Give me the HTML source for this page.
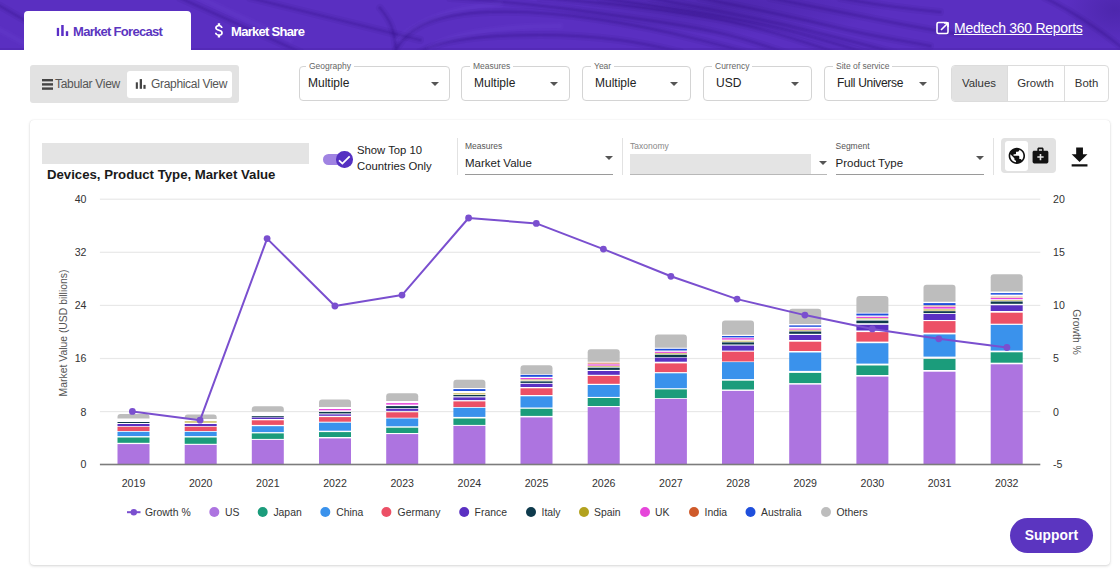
<!DOCTYPE html>
<html><head><meta charset="utf-8">
<style>
*{box-sizing:border-box;margin:0;padding:0}
html,body{width:1120px;height:569px;overflow:hidden;background:#fff;font-family:"Liberation Sans",sans-serif;color:#222}
.abs{position:absolute}
#hdr{position:absolute;left:0;top:0;width:1120px;height:50px;background:linear-gradient(90deg,#5c30c4 0%,#5a2fc0 40%,#5529b8 70%,#5a2fc0 100%);overflow:hidden}
.tab{position:absolute;top:12px;height:39px;font-weight:700;font-size:13px;letter-spacing:-0.7px;line-height:39px}
.box{position:absolute;top:66px;height:35px;border:1px solid #d4d4d4;border-radius:4px;background:#fff}
.box .lbl{position:absolute;top:-6px;left:8px;padding:0 3px;background:#fff;font-size:8.5px;color:#666;line-height:10px}
.box .val{position:absolute;left:12px;top:9px;font-size:12px;color:#222;line-height:14px}
.arr{position:absolute;width:0;height:0;border-left:4px solid transparent;border-right:4px solid transparent;border-top:4px solid #555}
.seg{position:absolute;top:65px;height:37px;font-size:11.4px;color:#333;line-height:37px;text-align:center}
</style></head><body>

<div id="hdr">
<svg width="1120" height="50" style="position:absolute;left:0;top:0">
 <defs>
  <radialGradient id="rg1" cx="0.5" cy="0.5" r="0.5"><stop offset="0" stop-color="#3a1a90" stop-opacity="0.4"/><stop offset="1" stop-color="#3a1a90" stop-opacity="0"/></radialGradient>
 </defs>
 <rect width="1120" height="50" fill="#5a2fc1"/>
 <ellipse cx="720" cy="6" rx="170" ry="30" fill="url(#rg1)"/>
 <ellipse cx="1115" cy="10" rx="50" ry="35" fill="url(#rg1)"/>
 <g fill="none" stroke="#2a0c78" stroke-opacity="0.07" stroke-width="8" stroke-linecap="round"><path d="M0 6 L80 52"/><path d="M180 -2 L300 52"/><path d="M250 -2 L420 40"/><path d="M395 52 C405 30 430 14 490 12 S620 20 700 40 S740 52 760 56"/><path d="M420 52 C440 40 480 35 540 35 S640 42 680 52"/><path d="M450 -2 C520 2 580 10 660 22 S760 45 790 54"/><path d="M540 -2 C600 2 650 8 700 16 S800 40 840 54"/><path d="M600 -2 C650 5 700 12 750 22 S840 45 870 54"/><path d="M650 -2 C690 6 740 14 790 26 S870 46 900 54"/><path d="M700 -2 C740 6 780 14 830 26 S900 40 930 46"/><path d="M770 -2 C800 4 840 12 880 20 S930 30 960 34"/><path d="M840 -2 C870 4 900 8 940 12"/><path d="M1045 -2 C1070 10 1100 30 1120 46"/><path d="M380 8 C390 20 395 30 396 52"/></g>
 <g fill="none" stroke="#2a0c78" stroke-opacity="0.09" stroke-width="4" stroke-linecap="round"><path d="M0 6 L80 52"/><path d="M180 -2 L300 52"/><path d="M250 -2 L420 40"/><path d="M395 52 C405 30 430 14 490 12 S620 20 700 40 S740 52 760 56"/><path d="M420 52 C440 40 480 35 540 35 S640 42 680 52"/><path d="M450 -2 C520 2 580 10 660 22 S760 45 790 54"/><path d="M540 -2 C600 2 650 8 700 16 S800 40 840 54"/><path d="M600 -2 C650 5 700 12 750 22 S840 45 870 54"/><path d="M650 -2 C690 6 740 14 790 26 S870 46 900 54"/><path d="M700 -2 C740 6 780 14 830 26 S900 40 930 46"/><path d="M770 -2 C800 4 840 12 880 20 S930 30 960 34"/><path d="M840 -2 C870 4 900 8 940 12"/><path d="M1045 -2 C1070 10 1100 30 1120 46"/><path d="M380 8 C390 20 395 30 396 52"/></g>
 <g fill="none" stroke="#2a0c78" stroke-opacity="0.12" stroke-width="1.8" stroke-linecap="round"><path d="M0 6 L80 52"/><path d="M180 -2 L300 52"/><path d="M250 -2 L420 40"/><path d="M395 52 C405 30 430 14 490 12 S620 20 700 40 S740 52 760 56"/><path d="M420 52 C440 40 480 35 540 35 S640 42 680 52"/><path d="M450 -2 C520 2 580 10 660 22 S760 45 790 54"/><path d="M540 -2 C600 2 650 8 700 16 S800 40 840 54"/><path d="M600 -2 C650 5 700 12 750 22 S840 45 870 54"/><path d="M650 -2 C690 6 740 14 790 26 S870 46 900 54"/><path d="M700 -2 C740 6 780 14 830 26 S900 40 930 46"/><path d="M770 -2 C800 4 840 12 880 20 S930 30 960 34"/><path d="M840 -2 C870 4 900 8 940 12"/><path d="M1045 -2 C1070 10 1100 30 1120 46"/><path d="M380 8 C390 20 395 30 396 52"/></g>
 <g fill="none" stroke="#8a62f0" stroke-opacity="0.05" stroke-width="8" stroke-linecap="round"><path d="M0 30 L40 52"/><path d="M200 -2 L290 40"/><path d="M398 40 C420 20 450 8 500 4"/><path d="M430 48 C450 34 500 26 560 26"/></g>
 <g fill="none" stroke="#8a62f0" stroke-opacity="0.06" stroke-width="4" stroke-linecap="round"><path d="M0 30 L40 52"/><path d="M200 -2 L290 40"/><path d="M398 40 C420 20 450 8 500 4"/><path d="M430 48 C450 34 500 26 560 26"/></g>
 <rect y="48" width="1120" height="2" fill="#4a24a8" opacity="0.4"/>
</svg>
</div>

<!-- Tabs -->
<div class="abs" style="left:24px;top:11px;width:167px;height:40px;background:#fff;border-radius:4px 4px 0 0"></div>
<svg class="abs" style="left:50px;top:20px" width="30" height="20"><rect x="6.8" y="7.9" width="2.3" height="8.1" fill="#5a2ec6"/><rect x="11.2" y="5" width="2.5" height="11" fill="#5a2ec6"/><rect x="15.8" y="11.2" width="2.4" height="4.8" fill="#5a2ec6"/></svg>
<div class="tab" style="left:73px;color:#5b35c0">Market Forecast</div>
<svg class="abs" style="left:210px;top:21px" width="20" height="20"><path transform="scale(0.78)" d="M11.8 10.9c-2.27-.59-3-1.2-3-2.15 0-1.09 1.01-1.85 2.7-1.85 1.78 0 2.44.85 2.5 2.1h2.21c-.07-1.72-1.12-3.3-3.21-3.81V3h-3v2.16c-1.94.42-3.5 1.68-3.5 3.61 0 2.31 1.91 3.46 4.7 4.13 2.5.6 3 1.48 3 2.41 0 .69-.49 1.79-2.7 1.79-2.06 0-2.87-.92-2.98-2.1h-2.2c.12 2.19 1.76 3.42 3.68 3.83V21h3v-2.15c1.95-.37 3.5-1.5 3.5-3.55 0-2.84-2.43-3.81-4.7-4.4z" fill="#fff"/></svg>
<div class="tab" style="left:231px;color:#fff">Market Share</div>

<!-- Medtech link -->
<svg class="abs" style="left:936px;top:21px" width="14" height="14"><rect x="1" y="1.5" width="11" height="11" rx="1.5" fill="none" stroke="#fff" stroke-width="1.6"/><path d="M5 9 L11.5 2.5 M8 2 H12 V6" fill="none" stroke="#fff" stroke-width="1.6"/></svg>
<div class="abs" style="left:954px;top:19.7px;font-size:14px;color:#fff;letter-spacing:-0.28px;text-decoration:underline;line-height:17px">Medtech 360 Reports</div>

<!-- View toggle -->
<div class="abs" style="left:30px;top:65px;width:209px;height:38px;background:#e2e2e2;border-radius:3px"></div>
<div class="abs" style="left:127px;top:71px;width:105px;height:26.5px;background:#fff;border-radius:3px"></div>
<svg class="abs" style="left:42px;top:79px" width="11" height="11"><rect x="0" y="0" width="11" height="2.4" fill="#444"/><rect x="0" y="4.2" width="11" height="2.4" fill="#444"/><rect x="0" y="8.4" width="11" height="2.4" fill="#444"/></svg>
<div class="abs" style="left:55px;top:77px;font-size:12px;letter-spacing:-0.3px;color:#555;line-height:14px">Tabular View</div>
<svg class="abs" style="left:135px;top:78px" width="12" height="12"><rect x="0.8" y="4.3" width="2.1" height="6.5" fill="#444"/><rect x="4.7" y="1.1" width="2.3" height="9.7" fill="#444"/><rect x="8.4" y="6.9" width="2.2" height="3.9" fill="#444"/></svg>
<div class="abs" style="left:151px;top:77px;font-size:12px;letter-spacing:-0.32px;color:#555;line-height:14px">Graphical View</div>

<!-- Filter boxes -->
<div class="box" style="left:299px;width:151px"><span class="lbl" style="left:6px">Geography</span><span class="val" style="left:8px">Multiple</span><span class="arr" style="left:131px;top:15px"></span></div>
<div class="box" style="left:461px;width:109px"><span class="lbl">Measures</span><span class="val">Multiple</span><span class="arr" style="left:88px;top:15px"></span></div>
<div class="box" style="left:582px;width:109px"><span class="lbl">Year</span><span class="val">Multiple</span><span class="arr" style="left:87px;top:15px"></span></div>
<div class="box" style="left:703px;width:109px"><span class="lbl">Currency</span><span class="val">USD</span><span class="arr" style="left:87px;top:15px"></span></div>
<div class="box" style="left:824px;width:115px"><span class="lbl">Site of service</span><span class="val" style="letter-spacing:-0.3px">Full Universe</span><span class="arr" style="left:94px;top:15px"></span></div>

<!-- Values/Growth/Both -->
<div class="abs" style="left:951px;top:65px;width:158px;height:37px;border:1px solid #dcdcdc;border-radius:4px;background:#fff;overflow:hidden">
 <div class="abs" style="left:0;top:0;width:55px;height:35px;background:#e2e2e2"></div>
 <div class="abs" style="left:112px;top:0;width:1px;height:35px;background:#dcdcdc"></div>
 <div class="abs" style="left:55px;top:0;width:1px;height:35px;background:#dcdcdc"></div>
</div>
<div class="seg" style="left:951px;width:56px">Values</div>
<div class="seg" style="left:1007px;width:57px">Growth</div>
<div class="seg" style="left:1064px;width:45px">Both</div>

<!-- Card -->
<div class="abs" style="left:30px;top:120px;width:1080px;height:445px;border-radius:4px;background:#fff;box-shadow:0 1px 3px 0 rgba(0,0,0,0.16),0 0 1px 0 rgba(0,0,0,0.12)"></div>

<svg class="abs" style="left:0;top:0" width="1120" height="569">
<rect x="99.9" y="198.6" width="940.4" height="1.2" fill="#e8e8e8"/>
<rect x="99.9" y="251.7" width="940.4" height="1.2" fill="#e8e8e8"/>
<rect x="99.9" y="304.8" width="940.4" height="1.2" fill="#e8e8e8"/>
<rect x="99.9" y="357.9" width="940.4" height="1.2" fill="#e8e8e8"/>
<rect x="99.9" y="411.0" width="940.4" height="1.2" fill="#e8e8e8"/>
<rect x="117.5" y="444.1" width="32" height="20.2" fill="#ad74e0"/>
<rect x="117.5" y="437.5" width="32" height="5.3" fill="#1b9c7b"/>
<rect x="117.5" y="431.8" width="32" height="4.3" fill="#3a92ec"/>
<rect x="117.5" y="426.8" width="32" height="4.2" fill="#ec5066"/>
<rect x="117.5" y="424.0" width="32" height="2.1" fill="#5a30c2"/>
<rect x="117.5" y="422.0" width="32" height="1.0" fill="#0e3a4c"/>
<path d="M117.5 418.4 V416.9 Q117.5 413.9 120.5 413.9 H146.5 Q149.5 413.9 149.5 416.9 V418.4 Z" fill="#bdbdbd"/>
<rect x="184.7" y="444.9" width="32" height="19.4" fill="#ad74e0"/>
<rect x="184.7" y="437.5" width="32" height="6.3" fill="#1b9c7b"/>
<rect x="184.7" y="431.8" width="32" height="4.3" fill="#3a92ec"/>
<rect x="184.7" y="426.8" width="32" height="4.2" fill="#ec5066"/>
<rect x="184.7" y="424.0" width="32" height="2.1" fill="#5a30c2"/>
<rect x="184.7" y="421.0" width="32" height="1.9" fill="#d5cb83"/>
<path d="M184.7 418.9 V417.4 Q184.7 414.4 187.7 414.4 H213.7 Q216.7 414.4 216.7 417.4 V418.9 Z" fill="#bdbdbd"/>
<rect x="251.8" y="439.9" width="32" height="24.4" fill="#ad74e0"/>
<rect x="251.8" y="433.4" width="32" height="5.5" fill="#1b9c7b"/>
<rect x="251.8" y="426.2" width="32" height="5.9" fill="#3a92ec"/>
<rect x="251.8" y="420.3" width="32" height="4.6" fill="#ec5066"/>
<rect x="251.8" y="417.5" width="32" height="1.5" fill="#5a30c2"/>
<rect x="251.8" y="416.2" width="32" height="0.9" fill="#0e3a4c"/>
<path d="M251.8 411.8 V409.2 Q251.8 406.2 254.8 406.2 H280.8 Q283.8 406.2 283.8 409.2 V411.8 Z" fill="#bdbdbd"/>
<rect x="319.0" y="438.4" width="32" height="25.9" fill="#ad74e0"/>
<rect x="319.0" y="432.1" width="32" height="4.9" fill="#1b9c7b"/>
<rect x="319.0" y="422.7" width="32" height="8.0" fill="#3a92ec"/>
<rect x="319.0" y="417.1" width="32" height="4.6" fill="#ec5066"/>
<rect x="319.0" y="414.4" width="32" height="1.4" fill="#5a30c2"/>
<rect x="319.0" y="412.0" width="32" height="1.4" fill="#0e3a4c"/>
<rect x="319.0" y="409.0" width="32" height="1.3" fill="#e646da"/>
<path d="M319.0 407.0 V402.6 Q319.0 399.6 322.0 399.6 H348.0 Q351.0 399.6 351.0 402.6 V407.0 Z" fill="#bdbdbd"/>
<rect x="386.2" y="434.1" width="32" height="30.2" fill="#ad74e0"/>
<rect x="386.2" y="427.7" width="32" height="5.3" fill="#1b9c7b"/>
<rect x="386.2" y="418.5" width="32" height="7.8" fill="#3a92ec"/>
<rect x="386.2" y="412.3" width="32" height="5.4" fill="#ec5066"/>
<rect x="386.2" y="408.8" width="32" height="2.1" fill="#5a30c2"/>
<rect x="386.2" y="406.1" width="32" height="2.0" fill="#0e3a4c"/>
<rect x="386.2" y="403.1" width="32" height="1.5" fill="#e646da"/>
<path d="M386.2 401.0 V396.3 Q386.2 393.3 389.2 393.3 H415.2 Q418.2 393.3 418.2 396.3 V401.0 Z" fill="#bdbdbd"/>
<rect x="453.4" y="425.9" width="32" height="38.4" fill="#ad74e0"/>
<rect x="453.4" y="418.5" width="32" height="6.4" fill="#1b9c7b"/>
<rect x="453.4" y="407.8" width="32" height="9.1" fill="#3a92ec"/>
<rect x="453.4" y="401.4" width="32" height="5.6" fill="#ec5066"/>
<rect x="453.4" y="397.4" width="32" height="2.7" fill="#5a30c2"/>
<rect x="453.4" y="395.0" width="32" height="1.3" fill="#0e3a4c"/>
<rect x="453.4" y="393.0" width="32" height="1.5" fill="#d5cb83"/>
<rect x="453.4" y="389.1" width="32" height="1.9" fill="#1f4fdc"/>
<path d="M453.4 388.1 V382.8 Q453.4 379.8 456.4 379.8 H482.4 Q485.4 379.8 485.4 382.8 V388.1 Z" fill="#bdbdbd"/>
<rect x="520.5" y="417.4" width="32" height="46.9" fill="#ad74e0"/>
<rect x="520.5" y="408.8" width="32" height="7.1" fill="#1b9c7b"/>
<rect x="520.5" y="396.3" width="32" height="11.2" fill="#3a92ec"/>
<rect x="520.5" y="388.3" width="32" height="6.7" fill="#ec5066"/>
<rect x="520.5" y="383.8" width="32" height="3.2" fill="#5a30c2"/>
<rect x="520.5" y="381.4" width="32" height="1.5" fill="#0e3a4c"/>
<rect x="520.5" y="379.3" width="32" height="1.2" fill="#d5cb83"/>
<rect x="520.5" y="378.0" width="32" height="1.2" fill="#e646da"/>
<rect x="520.5" y="374.9" width="32" height="1.9" fill="#1f4fdc"/>
<path d="M520.5 374.3 V368.2 Q520.5 365.2 523.5 365.2 H549.5 Q552.5 365.2 552.5 368.2 V374.3 Z" fill="#bdbdbd"/>
<rect x="587.7" y="407.1" width="32" height="57.2" fill="#ad74e0"/>
<rect x="587.7" y="398.0" width="32" height="8.0" fill="#1b9c7b"/>
<rect x="587.7" y="385.0" width="32" height="11.9" fill="#3a92ec"/>
<rect x="587.7" y="375.9" width="32" height="7.9" fill="#ec5066"/>
<rect x="587.7" y="371.0" width="32" height="3.8" fill="#5a30c2"/>
<rect x="587.7" y="367.7" width="32" height="2.2" fill="#0e3a4c"/>
<rect x="587.7" y="365.8" width="32" height="1.2" fill="#d5cb83"/>
<rect x="587.7" y="364.4" width="32" height="1.2" fill="#e646da"/>
<rect x="587.7" y="362.6" width="32" height="1.3" fill="#e4a489"/>
<path d="M587.7 361.7 V352.3 Q587.7 349.3 590.7 349.3 H616.7 Q619.7 349.3 619.7 352.3 V361.7 Z" fill="#bdbdbd"/>
<rect x="654.9" y="398.9" width="32" height="65.4" fill="#ad74e0"/>
<rect x="654.9" y="389.4" width="32" height="8.7" fill="#1b9c7b"/>
<rect x="654.9" y="373.3" width="32" height="14.9" fill="#3a92ec"/>
<rect x="654.9" y="363.4" width="32" height="8.7" fill="#ec5066"/>
<rect x="654.9" y="357.7" width="32" height="4.0" fill="#5a30c2"/>
<rect x="654.9" y="354.7" width="32" height="2.5" fill="#0e3a4c"/>
<rect x="654.9" y="353.0" width="32" height="1.2" fill="#d5cb83"/>
<rect x="654.9" y="351.8" width="32" height="1.1" fill="#e646da"/>
<rect x="654.9" y="348.8" width="32" height="1.7" fill="#1f4fdc"/>
<path d="M654.9 347.8 V337.4 Q654.9 334.4 657.9 334.4 H683.9 Q686.9 334.4 686.9 337.4 V347.8 Z" fill="#bdbdbd"/>
<rect x="722.0" y="390.9" width="32" height="73.4" fill="#ad74e0"/>
<rect x="722.0" y="380.7" width="32" height="8.8" fill="#1b9c7b"/>
<rect x="722.0" y="362.1" width="32" height="17.0" fill="#3a92ec"/>
<rect x="722.0" y="351.7" width="32" height="9.8" fill="#ec5066"/>
<rect x="722.0" y="345.6" width="32" height="5.0" fill="#5a30c2"/>
<rect x="722.0" y="342.4" width="32" height="2.1" fill="#0e3a4c"/>
<rect x="722.0" y="340.7" width="32" height="1.1" fill="#d5cb83"/>
<rect x="722.0" y="338.2" width="32" height="1.4" fill="#e646da"/>
<rect x="722.0" y="336.0" width="32" height="1.4" fill="#1f4fdc"/>
<path d="M722.0 334.7 V323.4 Q722.0 320.4 725.0 320.4 H751.0 Q754.0 320.4 754.0 323.4 V334.7 Z" fill="#bdbdbd"/>
<rect x="789.2" y="384.6" width="32" height="79.7" fill="#ad74e0"/>
<rect x="789.2" y="372.9" width="32" height="10.2" fill="#1b9c7b"/>
<rect x="789.2" y="352.5" width="32" height="18.4" fill="#3a92ec"/>
<rect x="789.2" y="341.7" width="32" height="9.3" fill="#ec5066"/>
<rect x="789.2" y="335.0" width="32" height="5.0" fill="#5a30c2"/>
<rect x="789.2" y="331.5" width="32" height="2.3" fill="#0e3a4c"/>
<rect x="789.2" y="329.8" width="32" height="1.1" fill="#d5cb83"/>
<rect x="789.2" y="328.6" width="32" height="1.0" fill="#e646da"/>
<rect x="789.2" y="325.4" width="32" height="1.4" fill="#1f4fdc"/>
<path d="M789.2 323.9 V311.8 Q789.2 308.8 792.2 308.8 H818.2 Q821.2 308.8 821.2 311.8 V323.9 Z" fill="#bdbdbd"/>
<rect x="856.4" y="376.6" width="32" height="87.7" fill="#ad74e0"/>
<rect x="856.4" y="365.5" width="32" height="9.5" fill="#1b9c7b"/>
<rect x="856.4" y="343.2" width="32" height="20.4" fill="#3a92ec"/>
<rect x="856.4" y="332.1" width="32" height="9.5" fill="#ec5066"/>
<rect x="856.4" y="324.8" width="32" height="5.7" fill="#5a30c2"/>
<rect x="856.4" y="320.6" width="32" height="2.6" fill="#0e3a4c"/>
<rect x="856.4" y="318.2" width="32" height="1.2" fill="#d5cb83"/>
<rect x="856.4" y="316.8" width="32" height="1.2" fill="#e646da"/>
<rect x="856.4" y="313.6" width="32" height="1.9" fill="#1f4fdc"/>
<path d="M856.4 312.7 V299.1 Q856.4 296.1 859.4 296.1 H885.4 Q888.4 296.1 888.4 299.1 V312.7 Z" fill="#bdbdbd"/>
<rect x="923.5" y="371.7" width="32" height="92.6" fill="#ad74e0"/>
<rect x="923.5" y="358.9" width="32" height="11.1" fill="#1b9c7b"/>
<rect x="923.5" y="334.4" width="32" height="22.2" fill="#3a92ec"/>
<rect x="923.5" y="321.1" width="32" height="11.6" fill="#ec5066"/>
<rect x="923.5" y="314.0" width="32" height="6.0" fill="#5a30c2"/>
<rect x="923.5" y="311.2" width="32" height="1.9" fill="#0e3a4c"/>
<rect x="923.5" y="309.1" width="32" height="1.8" fill="#d5cb83"/>
<rect x="923.5" y="306.9" width="32" height="1.7" fill="#e646da"/>
<rect x="923.5" y="305.5" width="32" height="1.0" fill="#e4a489"/>
<rect x="923.5" y="303.1" width="32" height="2.1" fill="#1f4fdc"/>
<path d="M923.5 301.8 V287.7 Q923.5 284.7 926.5 284.7 H952.5 Q955.5 284.7 955.5 287.7 V301.8 Z" fill="#bdbdbd"/>
<rect x="990.7" y="364.3" width="32" height="100.0" fill="#ad74e0"/>
<rect x="990.7" y="352.3" width="32" height="10.4" fill="#1b9c7b"/>
<rect x="990.7" y="324.9" width="32" height="25.7" fill="#3a92ec"/>
<rect x="990.7" y="312.7" width="32" height="11.0" fill="#ec5066"/>
<rect x="990.7" y="305.3" width="32" height="5.7" fill="#5a30c2"/>
<rect x="990.7" y="301.5" width="32" height="2.3" fill="#0e3a4c"/>
<rect x="990.7" y="300.0" width="32" height="0.9" fill="#d5cb83"/>
<rect x="990.7" y="298.0" width="32" height="1.2" fill="#e646da"/>
<rect x="990.7" y="296.6" width="32" height="0.9" fill="#e4a489"/>
<rect x="990.7" y="293.1" width="32" height="1.5" fill="#1f4fdc"/>
<path d="M990.7 291.6 V277.3 Q990.7 274.3 993.7 274.3 H1019.7 Q1022.7 274.3 1022.7 277.3 V291.6 Z" fill="#bdbdbd"/>
<rect x="99.9" y="463.7" width="940.4" height="1.6" fill="#7c7c7c"/>
<path d="M132.4 411.4 L200.1 420.2 L267.1 238.6 L334.9 306.0 L402.0 295.1 L468.6 218.0 L536.3 223.4 L603.4 249.1 L670.9 276.3 L737.1 299.1 L804.9 315.1 L872.3 328.9 L938.8 338.8 L1006.9 347.5" fill="none" stroke="#7a4fcf" stroke-width="2" stroke-linejoin="round"/>
<circle cx="132.4" cy="411.4" r="3.4" fill="#7a4fcf"/>
<circle cx="200.1" cy="420.2" r="3.4" fill="#7a4fcf"/>
<circle cx="267.1" cy="238.6" r="3.4" fill="#7a4fcf"/>
<circle cx="334.9" cy="306.0" r="3.4" fill="#7a4fcf"/>
<circle cx="402.0" cy="295.1" r="3.4" fill="#7a4fcf"/>
<circle cx="468.6" cy="218.0" r="3.4" fill="#7a4fcf"/>
<circle cx="536.3" cy="223.4" r="3.4" fill="#7a4fcf"/>
<circle cx="603.4" cy="249.1" r="3.4" fill="#7a4fcf"/>
<circle cx="670.9" cy="276.3" r="3.4" fill="#7a4fcf"/>
<circle cx="737.1" cy="299.1" r="3.4" fill="#7a4fcf"/>
<circle cx="804.9" cy="315.1" r="3.4" fill="#7a4fcf"/>
<circle cx="872.3" cy="328.9" r="3.4" fill="#7a4fcf"/>
<circle cx="938.8" cy="338.8" r="3.4" fill="#7a4fcf"/>
<circle cx="1006.9" cy="347.5" r="3.4" fill="#7a4fcf"/>
<text x="86.5" y="203.1" text-anchor="end" font-family="Liberation Sans" font-size="10.6" fill="#333">40</text>
<text x="86.5" y="256.2" text-anchor="end" font-family="Liberation Sans" font-size="10.6" fill="#333">32</text>
<text x="86.5" y="309.3" text-anchor="end" font-family="Liberation Sans" font-size="10.6" fill="#333">24</text>
<text x="86.5" y="362.4" text-anchor="end" font-family="Liberation Sans" font-size="10.6" fill="#333">16</text>
<text x="86.5" y="415.5" text-anchor="end" font-family="Liberation Sans" font-size="10.6" fill="#333">8</text>
<text x="86.5" y="468.4" text-anchor="end" font-family="Liberation Sans" font-size="10.6" fill="#333">0</text>
<text x="1053" y="203.1" font-family="Liberation Sans" font-size="10.6" fill="#333">20</text>
<text x="1053" y="256.2" font-family="Liberation Sans" font-size="10.6" fill="#333">15</text>
<text x="1053" y="309.3" font-family="Liberation Sans" font-size="10.6" fill="#333">10</text>
<text x="1053" y="362.4" font-family="Liberation Sans" font-size="10.6" fill="#333">5</text>
<text x="1053" y="415.5" font-family="Liberation Sans" font-size="10.6" fill="#333">0</text>
<text x="1053" y="468.4" font-family="Liberation Sans" font-size="10.6" fill="#333">-5</text>
<text x="133.5" y="487" text-anchor="middle" font-family="Liberation Sans" font-size="10.6" fill="#333">2019</text>
<text x="200.7" y="487" text-anchor="middle" font-family="Liberation Sans" font-size="10.6" fill="#333">2020</text>
<text x="267.8" y="487" text-anchor="middle" font-family="Liberation Sans" font-size="10.6" fill="#333">2021</text>
<text x="335.0" y="487" text-anchor="middle" font-family="Liberation Sans" font-size="10.6" fill="#333">2022</text>
<text x="402.2" y="487" text-anchor="middle" font-family="Liberation Sans" font-size="10.6" fill="#333">2023</text>
<text x="469.4" y="487" text-anchor="middle" font-family="Liberation Sans" font-size="10.6" fill="#333">2024</text>
<text x="536.5" y="487" text-anchor="middle" font-family="Liberation Sans" font-size="10.6" fill="#333">2025</text>
<text x="603.7" y="487" text-anchor="middle" font-family="Liberation Sans" font-size="10.6" fill="#333">2026</text>
<text x="670.9" y="487" text-anchor="middle" font-family="Liberation Sans" font-size="10.6" fill="#333">2027</text>
<text x="738.0" y="487" text-anchor="middle" font-family="Liberation Sans" font-size="10.6" fill="#333">2028</text>
<text x="805.2" y="487" text-anchor="middle" font-family="Liberation Sans" font-size="10.6" fill="#333">2029</text>
<text x="872.4" y="487" text-anchor="middle" font-family="Liberation Sans" font-size="10.6" fill="#333">2030</text>
<text x="939.5" y="487" text-anchor="middle" font-family="Liberation Sans" font-size="10.6" fill="#333">2031</text>
<text x="1006.7" y="487" text-anchor="middle" font-family="Liberation Sans" font-size="10.6" fill="#333">2032</text>
<text transform="translate(67.2 333) rotate(-90)" text-anchor="middle" font-family="Liberation Sans" font-size="10.4" fill="#555">Market Value (USD billions)</text>
<text transform="translate(1072.5 332) rotate(90)" text-anchor="middle" font-family="Liberation Sans" font-size="10.4" fill="#555">Growth %</text>
<rect x="127" y="511.2" width="13.5" height="2" fill="#7a4fcf"/><circle cx="133.8" cy="512.2" r="3.2" fill="#7a4fcf"/>
<text x="145" y="515.7" font-family="Liberation Sans" font-size="10.4" fill="#333">Growth %</text>
<circle cx="214.3" cy="512" r="5" fill="#ad74e0"/>
<text x="225" y="515.7" font-family="Liberation Sans" font-size="10.4" fill="#333">US</text>
<circle cx="262.7" cy="512" r="5" fill="#1b9c7b"/>
<text x="273.4" y="515.7" font-family="Liberation Sans" font-size="10.4" fill="#333">Japan</text>
<circle cx="325.3" cy="512" r="5" fill="#3a92ec"/>
<text x="336.2" y="515.7" font-family="Liberation Sans" font-size="10.4" fill="#333">China</text>
<circle cx="386.4" cy="512" r="5" fill="#ec5066"/>
<text x="397.6" y="515.7" font-family="Liberation Sans" font-size="10.4" fill="#333">Germany</text>
<circle cx="464.2" cy="512" r="5" fill="#5a30c2"/>
<text x="474.6" y="515.7" font-family="Liberation Sans" font-size="10.4" fill="#333">France</text>
<circle cx="531" cy="512" r="5" fill="#0e3a4c"/>
<text x="541.5" y="515.7" font-family="Liberation Sans" font-size="10.4" fill="#333">Italy</text>
<circle cx="584" cy="512" r="5" fill="#b3a21e"/>
<text x="594" y="515.7" font-family="Liberation Sans" font-size="10.4" fill="#333">Spain</text>
<circle cx="645" cy="512" r="5" fill="#e646da"/>
<text x="655" y="515.7" font-family="Liberation Sans" font-size="10.4" fill="#333">UK</text>
<circle cx="694" cy="512" r="5" fill="#cf5a2a"/>
<text x="704.5" y="515.7" font-family="Liberation Sans" font-size="10.4" fill="#333">India</text>
<circle cx="750.5" cy="512" r="5" fill="#1f4fdc"/>
<text x="761" y="515.7" font-family="Liberation Sans" font-size="10.4" fill="#333">Australia</text>
<circle cx="826" cy="512" r="5" fill="#bdbdbd"/>
<text x="836.5" y="515.7" font-family="Liberation Sans" font-size="10.4" fill="#333">Others</text>
</svg>

<!-- Card toolbar -->
<div class="abs" style="left:42px;top:143px;width:267px;height:21px;background:#e4e4e4"></div>
<div class="abs" style="left:47px;top:167px;font-weight:700;font-size:13.2px;color:#1a1a1a;line-height:16px">Devices, Product Type, Market Value</div>
<div class="abs" style="left:322.7px;top:153.8px;width:24px;height:11.7px;border-radius:6px;background:#a083e2"></div>
<div class="abs" style="left:336.3px;top:151.3px;width:16.4px;height:16.4px;border-radius:50%;background:#5530c2"></div>
<svg class="abs" style="left:336px;top:151px" width="17" height="17"><path d="M3 9.3 L6.4 12.6 L13.7 5.3" fill="none" stroke="#fff" stroke-width="1.8"/></svg>
<div class="abs" style="left:357px;top:142px;font-size:11.3px;color:#222;line-height:16px">Show Top 10<br>Countries Only</div>
<div class="abs" style="left:456.5px;top:137.5px;width:1px;height:37.5px;background:#e2e2e2"></div>
<div class="abs" style="left:465px;top:141px;font-size:8.5px;color:#555;line-height:10px">Measures</div>
<div class="abs" style="left:465px;top:155.5px;font-size:11.5px;color:#222;line-height:14px">Market Value</div>
<div class="abs" style="left:465px;top:174px;width:148px;height:1px;background:#9a9a9a"></div>
<span class="arr" style="left:605px;top:156px"></span>
<div class="abs" style="left:621.5px;top:137.5px;width:1px;height:37.5px;background:#e2e2e2"></div>
<div class="abs" style="left:630px;top:141px;font-size:8.5px;color:#888;line-height:10px">Taxonomy</div>
<div class="abs" style="left:630px;top:154px;width:181px;height:20px;background:#e4e4e4"></div>
<div class="abs" style="left:630px;top:174px;width:197px;height:1px;background:#b8b8b8"></div>
<span class="arr" style="left:818.5px;top:161px"></span>
<div class="abs" style="left:835.5px;top:141px;font-size:8.5px;color:#555;line-height:10px">Segment</div>
<div class="abs" style="left:835.5px;top:156px;font-size:11.5px;color:#222;line-height:14px">Product Type</div>
<div class="abs" style="left:835.5px;top:174px;width:148px;height:1px;background:#9a9a9a"></div>
<span class="arr" style="left:975.5px;top:156px"></span>
<div class="abs" style="left:992.5px;top:137.5px;width:1px;height:37.5px;background:#e2e2e2"></div>
<div class="abs" style="left:1001px;top:138px;width:55px;height:35px;border-radius:4px;background:#e2e2e2"></div>
<div class="abs" style="left:1004.5px;top:141px;width:23.5px;height:29.5px;border-radius:3px;background:#fff"></div>
<svg class="abs" style="left:1007.2px;top:146.3px" width="20" height="20"><path transform="scale(0.82)" d="M12 2C6.48 2 2 6.48 2 12s4.48 10 10 10 10-4.48 10-10S17.52 2 12 2zm-1 17.93c-3.95-.49-7-3.85-7-7.93 0-.62.08-1.21.21-1.79L9 15v1c0 1.1.9 2 2 2v1.93zm6.9-2.54c-.26-.81-1-1.39-1.9-1.39h-1v-3c0-.55-.45-1-1-1H8v-2h2c.55 0 1-.45 1-1V7h2c1.1 0 2-.9 2-2v-.41c2.93 1.19 5 4.06 5 7.41 0 2.08-.8 3.97-2.1 5.39z" fill="#111"/></svg>
<svg class="abs" style="left:1031.2px;top:146.4px" width="20" height="20"><path transform="scale(0.79)" d="M20 6h-4V4c0-1.1-.9-2-2-2h-4c-1.1 0-2 .9-2 2v2H4c-1.1 0-2 .9-2 2v12c0 1.1.9 2 2 2h16c1.1 0 2-.9 2-2V8c0-1.1-.9-2-2-2zM10 4h4v2h-4V4zm6 11h-3v3h-2v-3H8v-2h3v-3h2v3h3v2z" fill="#111"/></svg>
<svg class="abs" style="left:1066.2px;top:144.2px" width="24" height="24"><path transform="scale(1.13)" d="M19 9h-4V3H9v6H5l7 7 7-7zM5 18v2h14v-2H5z" fill="#111"/></svg>

<!-- Support -->
<div class="abs" style="left:1010px;top:518px;width:83px;height:35px;border-radius:18px;background:#5b35c0;color:#fff;font-weight:700;font-size:13.8px;line-height:35px;text-align:center;letter-spacing:0.1px">Support</div>


</body></html>
